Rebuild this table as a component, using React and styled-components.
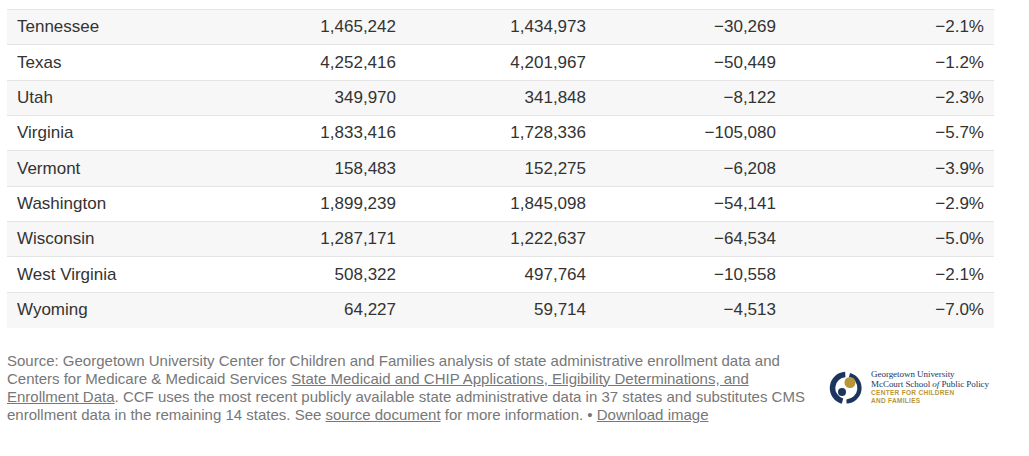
import React from 'react';
import styled, { createGlobalStyle } from 'styled-components';

const rows = [
    ['Tennessee', '1,465,242', '1,434,973', '−30,269', '−2.1%'],
    ['Texas', '4,252,416', '4,201,967', '−50,449', '−1.2%'],
    ['Utah', '349,970', '341,848', '−8,122', '−2.3%'],
    ['Virginia', '1,833,416', '1,728,336', '−105,080', '−5.7%'],
    ['Vermont', '158,483', '152,275', '−6,208', '−3.9%'],
    ['Washington', '1,899,239', '1,845,098', '−54,141', '−2.9%'],
    ['Wisconsin', '1,287,171', '1,222,637', '−64,534', '−5.0%'],
    ['West Virginia', '508,322', '497,764', '−10,558', '−2.1%'],
    ['Wyoming', '64,227', '59,714', '−4,513', '−7.0%'],
];

const GlobalStyle = createGlobalStyle`
    body {
        margin: 0;
        background: #fff;
        font-family: "Liberation Sans", Arial, sans-serif;
    }
`;

const Logo = () => (
    <LogoWrap>
        <svg width="34" height="38" viewBox="0 0 34 38">
            <path
                d="M 16.29 5.52 A 13.5 13.5 0 0 0 13.51 32.04"
                fill="none"
                stroke="#1c355e"
                strokeWidth="5.5"
            />
            <path
                d="M 20.49 5.96 A 13.5 13.5 0 0 1 17.47 32.49"
                fill="none"
                stroke="#1c355e"
                strokeWidth="4.2"
            />
            <circle cx="21" cy="13.5" r="5.5" fill="#b8963a" />
            <circle cx="13" cy="23" r="4" fill="#1c355e" />
        </svg>
        <LogoText>
            <LogoLine>Georgetown University</LogoLine>
            <LogoLine>
                McCourt School <em>of</em> Public Policy
            </LogoLine>
            <LogoCaps>Center for Children</LogoCaps>
            <LogoCaps>and Families</LogoCaps>
        </LogoText>
    </LogoWrap>
);

const App = () => (
    <>
        <GlobalStyle />
        <Page>
            <Table>
                {rows.map((row, i) => (
                    <Row key={row[0]} shaded={i % 2 === 0}>
                        {row.map((cell, j) => (
                            <Cell key={j} numeric={j > 0}>
                                {cell}
                            </Cell>
                        ))}
                    </Row>
                ))}
            </Table>
            <Footer>
                <Source>
                    Source: Georgetown University Center for Children and Families
                    analysis of state administrative enrollment data and Centers for
                    Medicare &amp; Medicaid Services{' '}
                    <a href="#">
                        State Medicaid and CHIP Applications, Eligibility
                        Determinations, and Enrollment Data
                    </a>
                    . CCF uses the most recent publicly available state administrative
                    data in 37 states and substitutes CMS enrollment data in the
                    remaining 14 states. See <a href="#">source document</a> for more
                    information. • <a href="#">Download image</a>
                </Source>
                <Logo />
            </Footer>
        </Page>
    </>
);

const Page = styled.div`
    padding: 9px 0 0 7px;
    width: 987px;
`;

const Table = styled.div`
    border-top: 1px solid #e4e4e4;
`;

const Row = styled.div`
    display: grid;
    grid-template-columns: 209px 190px 190px 190px 208px;
    height: 34.35px;
    align-items: center;
    background: ${({ shaded }) => (shaded ? '#f7f7f7' : '#fff')};
    border-bottom: 1px solid #e4e4e4;

    &:last-child {
        border-bottom: 0;
        height: 35.35px;
    }
`;

const Cell = styled.div`
    font-size: 17px;
    color: #333;
    padding: ${({ numeric }) => (numeric ? '0 10px 0 0' : '0 0 0 10px')};
    text-align: ${({ numeric }) => (numeric ? 'right' : 'left')};
    white-space: nowrap;
`;

const Footer = styled.div`
    display: flex;
    align-items: center;
    justify-content: space-between;
    margin-top: 23.5px;
`;

const Source = styled.p`
    margin: 0;
    width: 800px;
    font-size: 15px;
    line-height: 18px;
    color: #777;

    a {
        color: #777;
        text-decoration: underline;
    }
`;

const LogoWrap = styled.div`
    display: flex;
    align-items: center;
    gap: 8px;
    margin-right: 5px;
`;

const LogoText = styled.div`
    display: flex;
    flex-direction: column;
`;

const LogoLine = styled.span`
    font-family: "Liberation Serif", "Times New Roman", serif;
    font-size: 9px;
    line-height: 9.5px;
    color: #1c355e;
    letter-spacing: -0.05px;
    white-space: nowrap;
`;

const LogoCaps = styled.span`
    font-family: "Liberation Sans", Arial, sans-serif;
    font-size: 6.5px;
    line-height: 8px;
    font-weight: bold;
    color: #b8963a;
    text-transform: uppercase;
    letter-spacing: 0.3px;
    white-space: nowrap;
`;

export default App;
